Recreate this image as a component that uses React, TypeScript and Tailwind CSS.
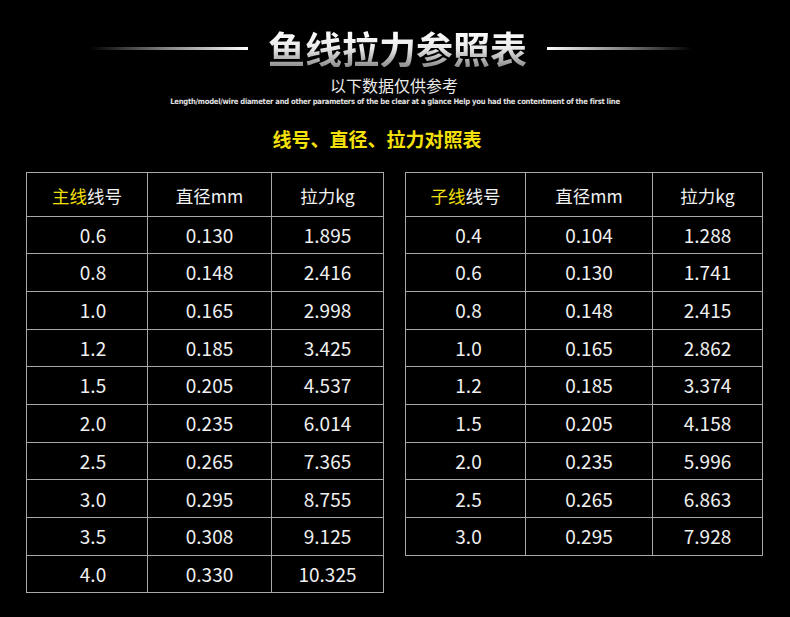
const MAIN = [
  ["0.6", "0.130", "1.895"],
  ["0.8", "0.148", "2.416"],
  ["1.0", "0.165", "2.998"],
  ["1.2", "0.185", "3.425"],
  ["1.5", "0.205", "4.537"],
  ["2.0", "0.235", "6.014"],
  ["2.5", "0.265", "7.365"],
  ["3.0", "0.295", "8.755"],
  ["3.5", "0.308", "9.125"],
  ["4.0", "0.330", "10.325"],
];

const SUB = [
  ["0.4", "0.104", "1.288"],
  ["0.6", "0.130", "1.741"],
  ["0.8", "0.148", "2.415"],
  ["1.0", "0.165", "2.862"],
  ["1.2", "0.185", "3.374"],
  ["1.5", "0.205", "4.158"],
  ["2.0", "0.235", "5.996"],
  ["2.5", "0.265", "6.863"],
  ["3.0", "0.295", "7.928"],
];

function LineTable({ label, rows, widths, firstPad }: { label: string; rows: string[][]; widths: number[]; firstPad: string }) {
  return (
    <table className="border-collapse table-fixed" style={{ width: widths.reduce((a, b) => a + b, 0) }}>
      <colgroup>
        {widths.map((w, i) => <col key={i} style={{ width: w }} />)}
      </colgroup>
      <thead>
        <tr className="h-[44px]">
          <th className="border border-[#a8a8a8] font-normal text-[17.5px] text-[#f2f2f2] pt-1">
            <span className="text-[#f5e10a]">{label}</span>线号
          </th>
          <th className="border border-[#a8a8a8] font-normal text-[17.5px] text-[#f2f2f2] pt-1">直径mm</th>
          <th className="border border-[#a8a8a8] font-normal text-[17.5px] text-[#f2f2f2] pt-1">拉力kg</th>
        </tr>
      </thead>
      <tbody>
        {rows.map(r => (
          <tr key={r[0] + r[1]} className="h-[37.7px]">
            {r.map((v, i) => (
              <td key={i} className={`border border-[#a8a8a8] text-center text-[19px] text-[#f0f0f0] ${i === 0 ? firstPad : ""}`}>{v}</td>
            ))}
          </tr>
        ))}
      </tbody>
    </table>
  );
}

export default function App() {
  return (
    <div className="w-[790px] h-[617px] bg-black overflow-hidden"
      style={{ fontFamily: '"Noto Sans CJK SC", "Noto Sans", sans-serif' }}>
      {/* ── Title ─── */}
      <div className="flex items-center justify-center gap-[20px] pt-[26px] h-[70px] pr-[8px]">
        <div className="w-[158px] h-[3px] bg-gradient-to-r from-transparent via-[#888] to-white" />
        <div className="text-[37px] font-bold leading-none bg-gradient-to-b from-white via-[#e8e8e8] to-[#8c8c8c] bg-clip-text text-transparent">
          鱼线拉力参照表
        </div>
        <div className="w-[145px] h-[3px] bg-gradient-to-l from-transparent via-[#888] to-white" />
      </div>

      <div className="text-center text-[16px] leading-none text-[#eaeaea] mt-[7px] pr-[2px]">以下数据仅供参考</div>
      <div className="text-center text-[7.6px] leading-none text-[#e0e0e0] mt-[5px] font-bold tracking-[-0.25px]"
        style={{ fontFamily: '"DejaVu Sans Condensed", "Liberation Sans Narrow", "Liberation Sans", sans-serif' }}>
        Length/model/wire diameter and other parameters of the be clear at a glance Help you had the contentment of the first line
      </div>

      <div className="text-center text-[19px] leading-none font-bold text-[#f5e10a] mt-[23px] pr-[36px]">
        线号、直径、拉力对照表
      </div>

      {/* ── Tables ─── */}
      <div className="flex items-start gap-[21px] pl-[26px] mt-[24px]">
        <LineTable label="主线" rows={MAIN} widths={[121, 124, 112]} firstPad="pl-[12px]" />
        <LineTable label="子线" rows={SUB} widths={[120, 127, 110]} firstPad="pl-[6px]" />
      </div>
    </div>
  );
}
